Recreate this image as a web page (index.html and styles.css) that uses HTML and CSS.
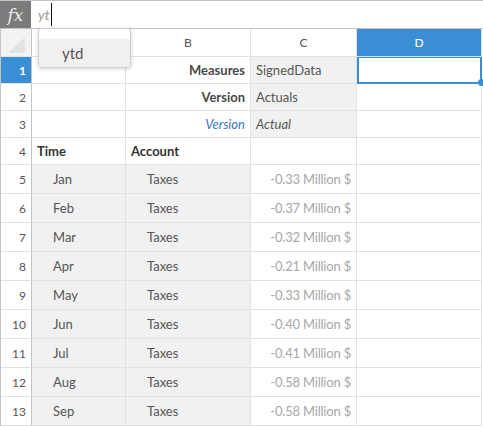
FILE: index.html
```html
<!DOCTYPE html>
<html>
<head>
<meta charset="utf-8">
<link rel="stylesheet" href="styles.css">
</head>
<body>
<div class="app">
  <div class="fbar">
    <div class="fx">fx</div>
    <div class="finput"><span class="typed">yt</span><span class="caret"></span></div>
  </div>
  <div class="sheet">
    <div class="corner"><span class="tri"></span></div>
    <div class="ch"></div>
    <div class="ch">B</div>
    <div class="ch">C</div>
    <div class="ch sel">D</div>

    <div class="rh sel">1</div>
    <div class="c"></div>
    <div class="c r b">Measures</div>
    <div class="c g">SignedData</div>
    <div class="c active"><span class="handle"></span></div>

    <div class="rh">2</div>
    <div class="c"></div>
    <div class="c r b">Version</div>
    <div class="c g">Actuals</div>
    <div class="c"></div>

    <div class="rh">3</div>
    <div class="c"></div>
    <div class="c r i blue">Version</div>
    <div class="c g i">Actual</div>
    <div class="c"></div>

    <div class="rh">4</div>
    <div class="c b dk">Time</div>
    <div class="c b dk">Account</div>
    <div class="c"></div>
    <div class="c"></div>

    <div class="rh">5</div><div class="c g ind">Jan</div><div class="c g ind">Taxes</div><div class="c r num">-0.33 Million $</div><div class="c"></div>
    <div class="rh">6</div><div class="c g ind">Feb</div><div class="c g ind">Taxes</div><div class="c r num">-0.37 Million $</div><div class="c"></div>
    <div class="rh">7</div><div class="c g ind">Mar</div><div class="c g ind">Taxes</div><div class="c r num">-0.32 Million $</div><div class="c"></div>
    <div class="rh">8</div><div class="c g ind">Apr</div><div class="c g ind">Taxes</div><div class="c r num">-0.21 Million $</div><div class="c"></div>
    <div class="rh">9</div><div class="c g ind">May</div><div class="c g ind">Taxes</div><div class="c r num">-0.33 Million $</div><div class="c"></div>
    <div class="rh">10</div><div class="c g ind">Jun</div><div class="c g ind">Taxes</div><div class="c r num">-0.40 Million $</div><div class="c"></div>
    <div class="rh">11</div><div class="c g ind">Jul</div><div class="c g ind">Taxes</div><div class="c r num">-0.41 Million $</div><div class="c"></div>
    <div class="rh">12</div><div class="c g ind">Aug</div><div class="c g ind">Taxes</div><div class="c r num">-0.58 Million $</div><div class="c"></div>
    <div class="rh">13</div><div class="c g ind">Sep</div><div class="c g ind">Taxes</div><div class="c r num">-0.58 Million $</div><div class="c"></div>
  </div>
  <div class="dropdown">
    <div class="dd-item">ytd</div>
  </div>
</div>
</body>
</html>
```
FILE: styles.css
```css
* { box-sizing: border-box; }
html, body { margin: 0; padding: 0; background: #fff; }
body { font-family: Lato, "Noto Sans", sans-serif; font-size: 13px; color: #555; }

.app { position: relative; width: 483px; height: 427px; overflow: hidden; }

.fbar {
  display: flex;
  height: 29px;
  border-top: 1px solid #c4c4c4;
  border-bottom: 1px solid #c4c4c4;
}
.fx {
  width: 31px;
  background: #7b7b7b;
  color: #ececec;
  font-family: "DejaVu Serif", "Liberation Serif", serif;
  font-style: italic;
  font-size: 17px;
  display: flex;
  align-items: center;
  justify-content: center;
}
.finput {
  flex: 1;
  display: flex;
  align-items: center;
  padding-left: 7px;
}
.typed { color: #9a9a9a; font-style: italic; font-size: 14px; }
.caret { width: 1px; height: 23px; background: #111; margin-left: 1px; }

.sheet {
  display: grid;
  width: 482px;
  grid-template-columns: 31px 94px 125px 106px 125px;
  grid-template-rows: 28px repeat(4, 27px) repeat(9, 29px);
  border-left: 1px solid #c4c4c4;
}
.sheet > div {
  border-right: 1px solid #e2e2e2;
  border-bottom: 1px solid #e2e2e2;
  display: flex;
  align-items: center;
  white-space: nowrap;
  overflow: visible;
}
.corner { background: #f3f3f3; position: relative; border-right-color: #c4c4c4 !important; }
.tri {
  position: absolute;
  right: 6px;
  bottom: 3px;
  width: 0; height: 0;
  border-left: 17px solid transparent;
  border-bottom: 16px solid #e3e3e3;
}
.ch { justify-content: center; font-size: 12px; color: #555; background: #fff; }
.ch.sel, .rh.sel { background: #3a8fd4; color: #fff; }
.rh {
  justify-content: flex-end;
  padding-right: 5px;
  font-size: 12px;
  color: #555;
  border-right-color: #c4c4c4 !important;
}
.rh.sel { font-weight: bold; }
.c { padding: 0 5px; color: #555; }
.r { justify-content: flex-end; }
.b { font-weight: bold; color: #4a4a4a; }
.dk { color: #333; }
.i { font-style: italic; }
.blue { color: #3a78c2; }
.g { background: #f1f1f1; }
.ind { padding-left: 21px; }
.num { color: #a8a8a8; letter-spacing: -0.2px; }
.active { position: relative; border: 2px solid #3a8fd4 !important; border-top-width: 1px !important; }
.handle {
  position: absolute;
  right: -5px;
  bottom: -4px;
  width: 7px; height: 7px;
  border-radius: 50%;
  background: #3a8fd4;
}

.dropdown {
  position: absolute;
  left: 38px;
  top: 28px;
  width: 93px;
  height: 40px;
  background: #fff;
  border: 1px solid #cfcfcf;
  border-radius: 3px;
  box-shadow: 0 1px 4px rgba(0,0,0,0.18);
  padding-top: 10px;
}
.dd-item {
  height: 28px;
  background: #f0f0f0;
  padding-left: 23px;
  font-size: 15px;
  color: #555;
  display: flex;
  align-items: center;
}
```
